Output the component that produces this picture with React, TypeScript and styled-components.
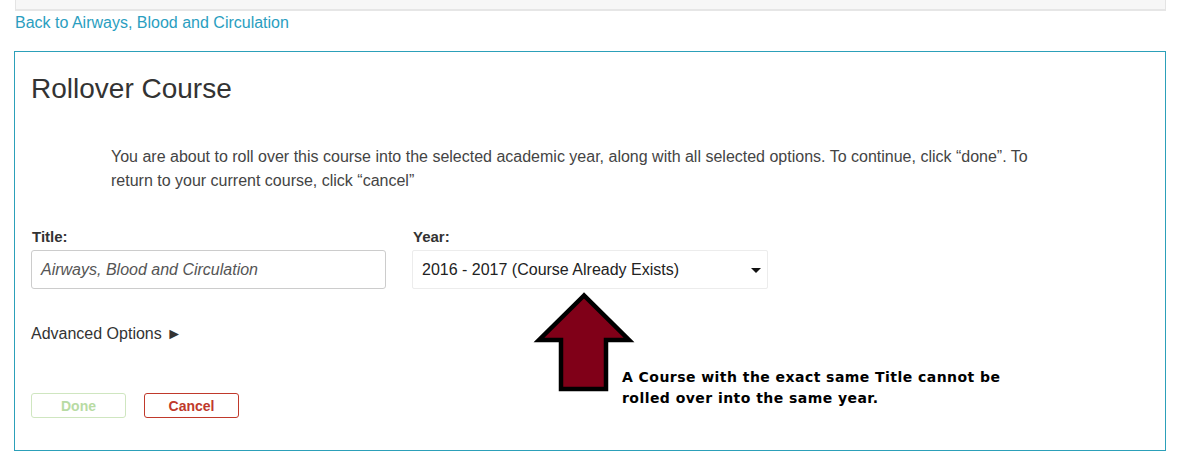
import React from "react";
import styled, { createGlobalStyle } from "styled-components";

const Global = createGlobalStyle`
  html, body { margin: 0; padding: 0; background: #fff; }
  body { font-family: "Liberation Sans", Arial, sans-serif; color: #333; }
  * { box-sizing: border-box; }
`;

const Page = styled.div`
  width: 1188px;
  padding-left: 14px;
`;

const TopWell = styled.div`
  margin-left: 1px;
  width: 1151px;
  height: 11px;
  background: #f7f7f7;
  border: 1px solid #e4e4e4;
  border-top: none;
  border-bottom: 2px solid #e6e6e6;
`;

const BackLink = styled.a`
  display: inline-block;
  margin: 1px 0 0 1px;
  font-size: 16px;
  line-height: 22px;
  color: #2a9ec0;
  text-decoration: none;
`;

const Card = styled.section`
  position: relative;
  margin-top: 17px;
  width: 1152px;
  border: 1px solid #2ca0b9;
  padding: 21px 16px 32px 16px;
`;

const Heading = styled.h1`
  margin: 0;
  font-size: 28px;
  line-height: 31px;
  font-weight: normal;
  color: #333;
`;

const Intro = styled.p`
  margin: 41px 0 0 80px;
  width: 940px;
  font-size: 16px;
  line-height: 24px;
  color: #444;
`;

const FieldRow = styled.div`
  margin-top: 34px;
  display: grid;
  grid-template-columns: 355px 356px;
  column-gap: 26px;
`;

const Field = styled.div`
  display: flex;
  flex-direction: column;
`;

const Label = styled.label`
  font-size: 15px;
  line-height: 20px;
  font-weight: bold;
  color: #333;
  margin: 0 0 3px 1px;
`;

const TextBox = styled.div`
  height: 39px;
  border: 1px solid #cccccc;
  border-radius: 3px;
  padding: 0 9px;
  display: flex;
  align-items: center;
  font-size: 16px;
  font-style: italic;
  color: #555;
`;

const SelectBox = styled.div`
  height: 39px;
  border: 1px solid #ececec;
  border-radius: 2px;
  padding: 0 6px 0 9px;
  display: flex;
  align-items: center;
  justify-content: space-between;
  font-size: 16px;
  color: #222;
`;

const Caret = styled.span`
  width: 0;
  height: 0;
  border-left: 5px solid transparent;
  border-right: 5px solid transparent;
  border-top: 5px solid #111;
  margin-top: 2px;
`;

const Advanced = styled.div`
  margin-top: 34px;
  font-size: 16px;
  line-height: 22px;
  color: #333;
`;

const Actions = styled.div`
  margin-top: 48px;
  display: flex;
  gap: 18px;
`;

const Button = styled.button<{ $tone: "done" | "cancel" }>`
  width: 95px;
  height: 25px;
  padding: 0;
  background: #fff;
  border-radius: 3px;
  font-family: "Liberation Sans", Arial, sans-serif;
  font-size: 14px;
  font-weight: bold;
  border: 1px solid ${(p) => (p.$tone === "done" ? "#cfe6c0" : "#c0392b")};
  color: ${(p) => (p.$tone === "done" ? "#b8dba4" : "#c0392b")};
`;

const ArrowMark = styled.svg`
  position: absolute;
  left: 519px;
  top: 237px;
  width: 100px;
  height: 104px;
  overflow: visible;
`;

const Note = styled.div`
  position: absolute;
  left: 607px;
  top: 315px;
  font-family: "DejaVu Sans", Verdana, sans-serif;
  font-weight: bold;
  font-size: 14px;
  letter-spacing: 0.45px;
  line-height: 21px;
  color: #000;
  white-space: nowrap;
`;

export default function App() {
  return (
    <Page>
      <Global />
      <TopWell />
      <BackLink href="#">Back to Airways, Blood and Circulation</BackLink>
      <Card>
        <Heading>Rollover Course</Heading>
        <Intro>
          You are about to roll over this course into the selected academic year, along with all
          selected options. To continue, click “done”. To return to your current course, click
          “cancel”
        </Intro>
        <FieldRow>
          <Field>
            <Label>Title:</Label>
            <TextBox>Airways, Blood and Circulation</TextBox>
          </Field>
          <Field>
            <Label>Year:</Label>
            <SelectBox>
              <span>2016 - 2017 (Course Already Exists)</span>
              <Caret />
            </SelectBox>
          </Field>
        </FieldRow>
        <Advanced>Advanced Options ►</Advanced>
        <Actions>
          <Button $tone="done">Done</Button>
          <Button $tone="cancel">Cancel</Button>
        </Actions>
        <ArrowMark viewBox="0 0 100 104">
          <polygon
            points="50,6.5 5,51 27,51 27,100 72,100 72,51 95,51"
            fill="#800018"
            stroke="#000"
            strokeWidth="4.5"
            strokeLinejoin="miter"
          />
        </ArrowMark>
        <Note>
          A Course with the exact same Title cannot be
          <br />
          rolled over into the same year.
        </Note>
      </Card>
    </Page>
  );
}
